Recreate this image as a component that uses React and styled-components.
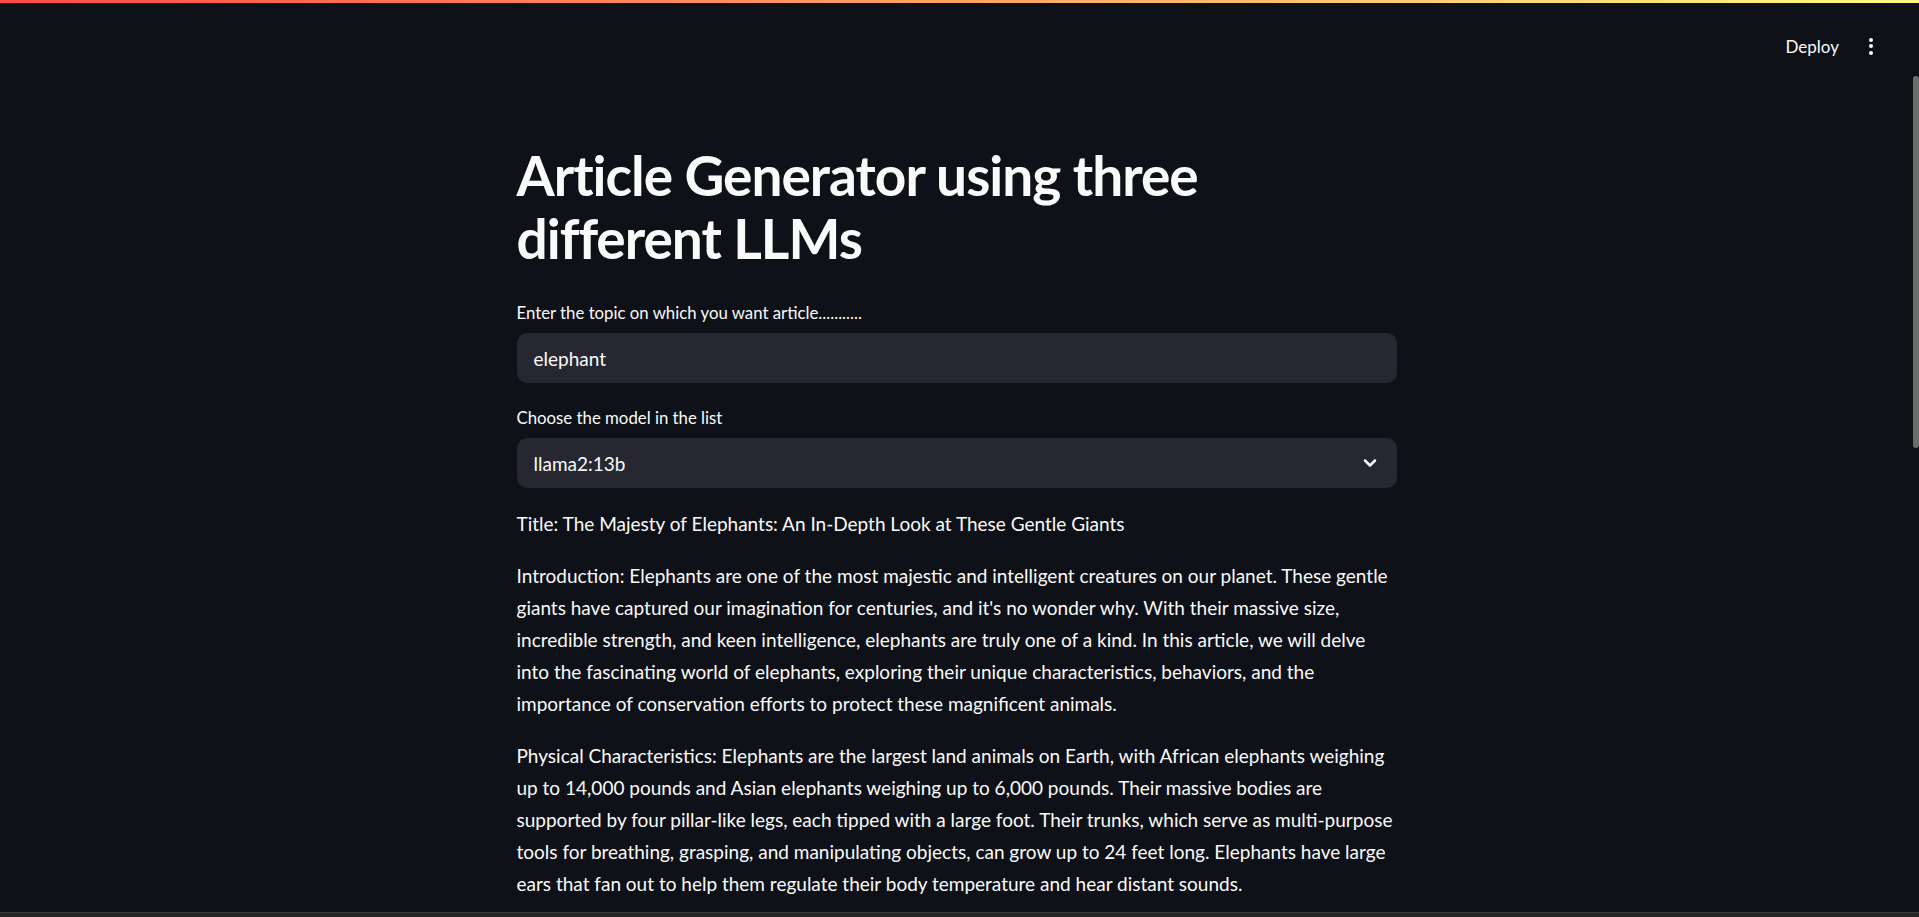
import React from 'react'
import styled, { createGlobalStyle } from 'styled-components'
import { ChevronDown } from 'lucide-react'

const GlobalStyle = createGlobalStyle`
  html, body {
    margin: 0;
    padding: 0;
    background: #0e1117;
    overflow: hidden;
  }
  * { box-sizing: border-box; }
`

const Page = styled.div`
  position: relative;
  height: 917px;
  background: #0e1117;
  color: #fafafa;
  font-family: "Lato", "Noto Sans", sans-serif;
  overflow: hidden;
`

const Decoration = styled.div`
  height: 3px;
  background: linear-gradient(90deg, rgb(255, 75, 75), rgb(255, 253, 128));
`

const Header = styled.header`
  display: flex;
  justify-content: flex-end;
  align-items: center;
  gap: 22px;
  height: 86px;
  padding: 0 46px 0 0;
  margin-bottom: 55px;
`

const DeployButton = styled.button`
  background: transparent;
  border: none;
  color: #fafafa;
  font-family: inherit;
  font-size: 17px;
  padding: 4px 8px;
  cursor: pointer;
`

const Kebab = styled.div`
  display: flex;
  flex-direction: column;
  gap: 2.5px;
  span {
    width: 4px;
    height: 4px;
    border-radius: 50%;
    background: #fafafa;
  }
`

const Main = styled.main`
  display: flex;
  justify-content: center;
  padding-right: 6px;
`

const Block = styled.div`
  width: 880px;
  display: flex;
  flex-direction: column;
  gap: 20px;
`

const Title = styled.h1`
  margin: 0 0 8px;
  font-size: 55px;
  font-weight: 700;
  line-height: 63px;
  letter-spacing: -1px;
`

const Field = styled.div`
  display: flex;
  flex-direction: column;
  gap: 5px;
`

const Label = styled.label`
  font-size: 16.8px;
  line-height: 30px;
`

const Box = styled.div`
  height: 50px;
  background: #262730;
  border-radius: 10px;
  display: flex;
  align-items: center;
  justify-content: space-between;
  padding: 0 17px;
  font-size: 19px;
  color: #fafafa;
`

const Article = styled.div`
  font-size: 19px;
  line-height: 32px;
  p {
    margin: 0 0 20px;
  }
`

const ScrollThumb = styled.div`
  position: absolute;
  right: 0;
  top: 76px;
  width: 6px;
  height: 372px;
  border-radius: 3px;
  background: #6c6c6c;
`

const BottomTrack = styled.div`
  position: absolute;
  left: 0;
  right: 0;
  bottom: 0;
  height: 5px;
  background: #262626;
  border-top: 1px solid #3c3c3c;
`

export default function App() {
  return (
    <Page>
      <GlobalStyle />
      <Decoration />
      <Header>
        <DeployButton>Deploy</DeployButton>
        <Kebab><span /><span /><span /></Kebab>
      </Header>
      <Main>
        <Block>
          <Title>Article Generator using three different LLMs</Title>
          <Field>
            <Label>Enter the topic on which you want article...........</Label>
            <Box>elephant</Box>
          </Field>
          <Field>
            <Label>Choose the model in the list</Label>
            <Box>
              llama2:13b
              <ChevronDown size={20} strokeWidth={3} />
            </Box>
          </Field>
          <Article>
            <p>Title: The Majesty of Elephants: An In-Depth Look at These Gentle Giants</p>
            <p>Introduction: Elephants are one of the most majestic and intelligent creatures on our planet. These gentle giants have captured our imagination for centuries, and it's no wonder why. With their massive size, incredible strength, and keen intelligence, elephants are truly one of a kind. In this article, we will delve into the fascinating world of elephants, exploring their unique characteristics, behaviors, and the importance of conservation efforts to protect these magnificent animals.</p>
            <p>Physical Characteristics: Elephants are the largest land animals on Earth, with African elephants weighing up to 14,000 pounds and Asian elephants weighing up to 6,000 pounds. Their massive bodies are supported by four pillar-like legs, each tipped with a large foot. Their trunks, which serve as multi-purpose tools for breathing, grasping, and manipulating objects, can grow up to 24 feet long. Elephants have large ears that fan out to help them regulate their body temperature and hear distant sounds.</p>
          </Article>
        </Block>
      </Main>
      <ScrollThumb />
      <BottomTrack />
    </Page>
  )
}
